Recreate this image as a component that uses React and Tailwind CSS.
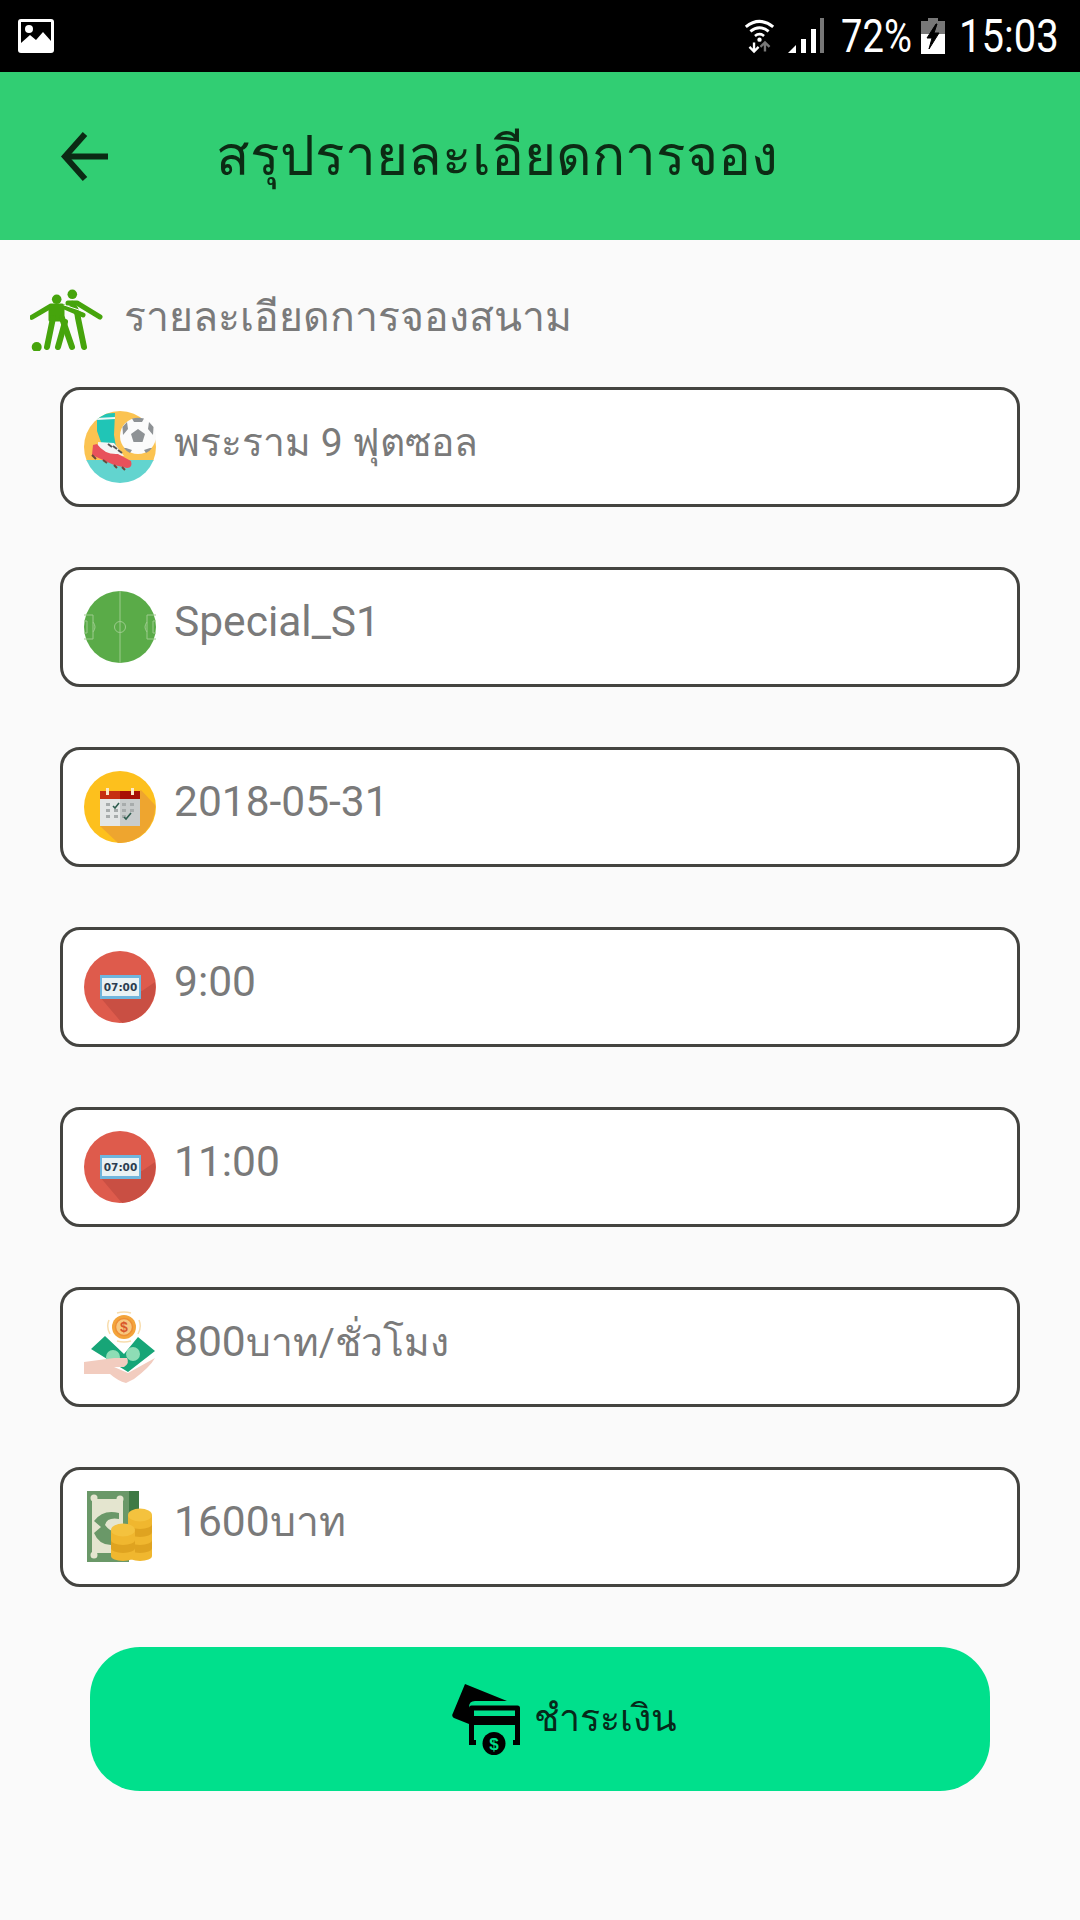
import React from 'react';

function ImageIcon() {
  return (
    <svg width="36" height="34" viewBox="0 0 36 34">
      <rect width="36" height="34" rx="3" fill="#fff" />
      <rect x="3" y="3" width="30" height="20" fill="#000" />
      <path d="M3 23 L11 17 L17 22 L25 13 L33 22 V25 H3 Z" fill="#000" />
      <path d="M3 24 L12 16 L18 21 L25 13 L33 22 V31 H3 Z" fill="#fff" />
      <circle cx="11" cy="10" r="4" fill="#fff" />
    </svg>
  );
}

function WifiIcon() {
  return (
    <svg width="31" height="38" viewBox="0 0 34 38" fill="none">
      <path d="M2 9 Q17 -3 32 9" stroke="#fff" strokeWidth="3.4" />
      <path d="M7 14 Q17 6 27 14" stroke="#fff" strokeWidth="3.2" />
      <path d="M12 19 Q17 15 22 19" stroke="#fff" strokeWidth="3" />
      <circle cx="17" cy="23" r="2.4" fill="#fff" />
      <path d="M11 26 V34 M6 31 L11 36 L16 31" stroke="#fff" strokeWidth="2.6" />
      <path d="M23 36 V27 M18 31 L23 26 L28 31" stroke="#777" strokeWidth="2.6" />
    </svg>
  );
}

function SignalIcon() {
  return (
    <svg width="36" height="36" viewBox="0 0 36 36">
      <path d="M0 35 L8 27 V35 Z M13 21 H18 V35 H13 Z M23 11 H28 V35 H23 Z" fill="#fff" />
      <rect x="32" y="0" width="4" height="35" fill="#777" />
    </svg>
  );
}

function BatteryIcon() {
  return (
    <svg width="24" height="36" viewBox="0 0 24 36">
      <path d="M7 0 H17 V3 H24 V16 H0 V3 H7 Z" fill="#777" />
      <rect y="16" width="24" height="20" fill="#fff" />
      <path d="M15 6 L6 20 H11 L8 31 L18 15 H13 L16 6 Z" fill="#000" stroke="#000" strokeWidth="1" />
    </svg>
  );
}

function BackArrow() {
  return (
    <svg width="57" height="57" viewBox="0 0 57 57" fill="none" stroke="#0b2a14" strokeWidth="6">
      <path d="M52 28.5 H10" />
      <path d="M29 6 L9 28.5 L29 51" />
    </svg>
  );
}

function PlayersIcon() {
  return (
    <svg width="76" height="66" viewBox="10 5 76 66" fill="none" stroke="#46A40C" strokeLinecap="round" strokeLinejoin="round">
      <circle cx="52.3" cy="14.3" r="4.8" fill="#46A40C" stroke="none" />
      <circle cx="36.7" cy="19.3" r="4.8" fill="#46A40C" stroke="none" />
      <circle cx="16.7" cy="67" r="5" fill="#46A40C" stroke="none" />
      {/* back player */}
      <path d="M48 23 H57 L80 37" strokeWidth="5" />
      <path d="M52 24 Q58 32 58 38 L64 67" strokeWidth="6" />
      <path d="M45 42 L38 67" strokeWidth="6" />
      {/* front player */}
      <path d="M11.7 37.3 L31 26 H42 L63 35" strokeWidth="5" />
      <path d="M30 28 H43 V40 H30 Z" fill="#46A40C" strokeWidth="3" />
      <path d="M33 38 L27 67" strokeWidth="6" />
      <path d="M42 38 L52 67" strokeWidth="6" />
      <path d="M44 25 L65 32" stroke="#fafafa" strokeWidth="1" />
    </svg>
  );
}

function BallIcon() {
  return (
    <svg width="72" height="72" viewBox="0 0 72 72">
      <clipPath id="ballClip"><circle cx="36" cy="36" r="36" /></clipPath>
      <g clipPath="url(#ballClip)">
        <rect width="72" height="50" fill="#FBC351" />
        <rect y="49" width="72" height="23" fill="#62D4CF" />
        <path d="M13 3 L31 2 L30 24 L32 36 L18 34 L13 20 Z" fill="#20C5B6" />
        <path d="M13 7 L31 6 V8 L13 9 Z" fill="#eef8f6" />
        <path d="M14 31 L30 32 L40 45 L28 44 L14 38 Z" fill="#f4f4f4" />
      </g>
      <path d="M9 34 L13 33 Q21 44 34 43 L47 50 Q49 57 43 57 L30 54 L8 44 Z" fill="#E8515B" />
      <path d="M8 44 L12 48 M19 49 L23 52 M30 54 L33 57 M38 56 L41 59" stroke="#6b4a3a" strokeWidth="2" />
      <path d="M24 33 L28 36 M29 35 L33 38 M34 39 L38 42" stroke="#555" strokeWidth="2" />
      <circle cx="54" cy="25" r="18" fill="#fbfbfb" />
      <path d="M54 18 L61 23 L58.5 31 L49.5 31 L47 23 Z" fill="#8e9295" />
      <path d="M48 7.5 Q54 6 60 7.5 L58 11 H50 Z M38.5 16 L43 11 L44 18 L39 24 Z M69.5 16 L65 11 L64 18 L69 24 Z M42 37 L48 39 L46 42 Q42 40 40 37 Z M66 37 L60 39 L62 42 Q66 40 68 37 Z" fill="#8e9295" />
    </svg>
  );
}

function PitchIcon() {
  return (
    <svg width="72" height="72" viewBox="0 0 72 72" fill="none" stroke="#9CCB8C" strokeWidth="1">
      <circle cx="36" cy="36" r="36" fill="#5AAB48" stroke="none" />
      <path d="M36 0 V72" />
      <circle cx="36" cy="36" r="5.5" />
      <path d="M0 24 H9 V48 H0 M0 30 H3 V42 H0 M9 31 Q13 36 9 41" />
      <path d="M72 24 H63 V48 H72 M72 30 H69 V42 H72 M63 31 Q59 36 63 41" />
    </svg>
  );
}

function CalendarIcon() {
  return (
    <svg width="72" height="72" viewBox="0 0 72 72">
      <circle cx="36" cy="36" r="36" fill="#FDC01D" />
      <path d="M57 19 L71 34 A36 36 0 0 1 34 72 L16 55 Z" fill="#EEA52F" />
      <rect x="16" y="25" width="20" height="30" fill="#E3E6E6" />
      <rect x="36" y="25" width="20" height="30" fill="#C8CCCC" />
      <rect x="16" y="20" width="20" height="8" fill="#C62F12" />
      <rect x="36" y="20" width="20" height="8" fill="#A80F06" />
      <rect x="22" y="17" width="3" height="7" fill="#FBE9C9" />
      <rect x="47" y="17" width="3" height="7" fill="#FBE9C9" />
      <g fill="#A7ACAC">
        <rect x="22" y="32" width="4" height="3" /><rect x="22" y="38" width="4" height="3" /><rect x="22" y="44" width="4" height="3" />
        <rect x="30" y="38" width="4" height="3" /><rect x="30" y="44" width="4" height="3" />
        <rect x="38" y="32" width="4" height="3" /><rect x="38" y="38" width="4" height="3" /><rect x="38" y="44" width="4" height="3" />
        <rect x="46" y="32" width="4" height="3" /><rect x="46" y="38" width="4" height="3" />
      </g>
      <path d="M29 35 L31 37 L35 32 M40 46 L42 48 L47 42" stroke="#2F5E50" strokeWidth="1.6" fill="none" />
    </svg>
  );
}

function ClockIcon() {
  return (
    <svg width="72" height="72" viewBox="0 0 72 72">
      <circle cx="36" cy="36" r="36" fill="#DE5B4C" />
      <path d="M58 40 L71 31 A36 36 0 0 1 38 72 L16 46 Z" fill="#C94F43" />
      <rect x="16" y="24" width="41" height="24" fill="#6FB5DD" />
      <rect x="18" y="27" width="37" height="18" fill="#EAF2F4" />
      <text x="36.5" y="40" textAnchor="middle" fontSize="10.5" fontWeight="700" fill="#2C3E50" fontFamily="'DejaVu Sans', sans-serif">07:00</text>
    </svg>
  );
}

function HandMoneyIcon() {
  return (
    <svg width="72" height="72" viewBox="0 0 72 72">
      <path d="M25 9 Q22 16 26 23 M55 9 Q58 16 54 23 M33 2 Q40 0 47 2 M33 30 Q40 32 47 30" stroke="#F8DDAE" strokeWidth="1.5" fill="none" />
      <circle cx="40" cy="16" r="12" fill="#F3A43B" />
      <circle cx="40" cy="16" r="8.5" fill="#F7C77E" stroke="#EE8E34" strokeWidth="1.5" />
      <text x="40" y="21" textAnchor="middle" fontSize="14" fontWeight="700" fill="#D9572B" fontFamily="'Liberation Sans', sans-serif">$</text>
      <path d="M7 38 L21 25 L40 43 L54 26 L71 40 L44 61 Z" fill="#17A577" />
      <circle cx="29" cy="46" r="7" fill="#8EDDB5" />
      <circle cx="49" cy="43" r="7" fill="#8EDDB5" />
      <path d="M0 51 L30 47 H43 Q46 52 40 56 H30 L44 62 L71 47 Q66 56 50 68 L42 72 Q34 70 26 63 H0 Z" fill="#F2CCBF" />
    </svg>
  );
}

function CashCoinsIcon() {
  const stack = (x, top, n) =>
    Array.from({ length: n }).map((_, k) => {
      const i = n - 1 - k;
      const tone = i % 2 ? '#DFA320' : '#F0B72F';
      return (
        <g key={`${x}-${i}`}>
          <ellipse cx={x + 12} cy={top + 9 + i * 8} rx="12" ry="5" fill={tone} />
          <rect x={x} y={top + i * 8} width="24" height="9" fill={tone} />
        </g>
      );
    });
  return (
    <svg width="66" height="72" viewBox="0 0 66 72">
      <rect x="0" y="0" width="42" height="71" fill="#6A9868" />
      <rect x="42" y="0" width="10" height="40" fill="#3F7A45" />
      <path d="M5 8 H36 V62 H5 Z" fill="#E4E5CF" />
      <circle cx="7" cy="7" r="3.5" fill="#E4E5CF" /><circle cx="33" cy="8" r="3.5" fill="#E4E5CF" /><circle cx="7" cy="64" r="3.5" fill="#E4E5CF" />
      <path d="M7 30 Q16 18 32 22 V28 Q20 26 18 34 Q24 42 30 40 L24 54 Q12 54 7 42 L14 36 Z" fill="#6A9868" />
      {stack(41, 24, 5)}
      <ellipse cx="53" cy="24" rx="12" ry="6.5" fill="#F4C23E" />
      {stack(24, 40, 3)}
      <ellipse cx="36" cy="39" rx="12" ry="6.5" fill="#F4C23E" />
    </svg>
  );
}

function PayIcon() {
  return (
    <svg width="72" height="72" viewBox="0 0 72 72">
      <path d="M14 1 L56 18 H24 Q18 18 18 24 V41 L3 35 Q0 33 2 30 Z" fill="#000" />
      <path d="M20.5 59 V25 H66.5 V59" fill="none" stroke="#000" strokeWidth="5" strokeLinejoin="round" />
      <path d="M18 59.5 H25 M69 59.5 H62" stroke="#000" strokeWidth="5" />
      <rect x="18" y="33" width="51" height="9" fill="#000" />
      <circle cx="43" cy="60.5" r="11.5" fill="#000" />
      <text x="43" y="66.5" textAnchor="middle" fontSize="17" fontWeight="700" fill="#00E08C" fontFamily="'Liberation Sans', sans-serif">$</text>
    </svg>
  );
}

const rows = [
  { icon: <BallIcon />, text: <span className="text-[39px]">พระราม 9 ฟุตซอล</span> },
  { icon: <PitchIcon />, text: 'Special_S1' },
  { icon: <CalendarIcon />, text: '2018-05-31' },
  { icon: <ClockIcon />, text: '9:00' },
  { icon: <ClockIcon />, text: '11:00' },
  { icon: <HandMoneyIcon />, text: <>800<span className="text-[39px]">บาท/ชั่วโมง</span></> },
  { icon: <CashCoinsIcon />, text: <>1600<span className="text-[41px]">บาท</span></> },
];

export default function App() {
  return (
    <div className="w-[1080px] h-[1920px] bg-[#fafafa] font-['Roboto','Noto_Sans',sans-serif] overflow-hidden">
      {/* Status bar */}
      <div className="h-[72px] bg-black flex items-center justify-between pl-[18px] pr-[25px] text-white">
        <ImageIcon />
        <div className="flex items-center">
          <WifiIcon />
          <div className="ml-[13px]"><SignalIcon /></div>
          <span className="ml-[17px] w-[70px] text-[46px] leading-none whitespace-nowrap origin-left scale-x-[0.83]">72%</span>
          <div className="ml-[10px]"><BatteryIcon /></div>
          <span className="ml-[14px] w-[96px] text-[46px] leading-none whitespace-nowrap origin-left scale-x-[0.87]">15:03</span>
        </div>
      </div>

      {/* Header */}
      <div className="h-[168px] bg-[#31CE73] flex items-center pl-[56px]">
        <BackArrow />
        <h1 className="ml-[103px] text-[55px] leading-none font-normal text-[#0c2b14]">สรุปรายละเอียดการจอง</h1>
      </div>

      {/* Section title */}
      <div className="flex items-center h-[147px] pl-[30px] pt-[8px]">
        <PlayersIcon />
        <span className="ml-[18px] text-[41px] leading-none text-[#7a7a7a]">รายละเอียดการจองสนาม</span>
      </div>

      <div className="flex flex-col gap-[60px] px-[60px]">
        {rows.map((row, i) => (
          <div key={i} className="h-[120px] w-[960px] bg-white border-[3px] border-[#444440] rounded-[20px] flex items-center pl-[21px]">
            <div className="w-[72px] h-[72px] flex items-center justify-center shrink-0">{row.icon}</div>
            <span className="ml-[18px] pb-[10px] text-[42.5px] leading-none text-[#7a7a7a]">{row.text}</span>
          </div>
        ))}
      </div>

      {/* Pay button */}
      <div className="mt-[60px] mx-[90px] h-[144px] w-[900px] bg-[#00E08C] rounded-[50px] flex items-center pl-[361px]">
        <PayIcon />
        <span className="ml-[11px] text-[37.5px] leading-none text-[#06291a]">ชำระเงิน</span>
      </div>
    </div>
  );
}
